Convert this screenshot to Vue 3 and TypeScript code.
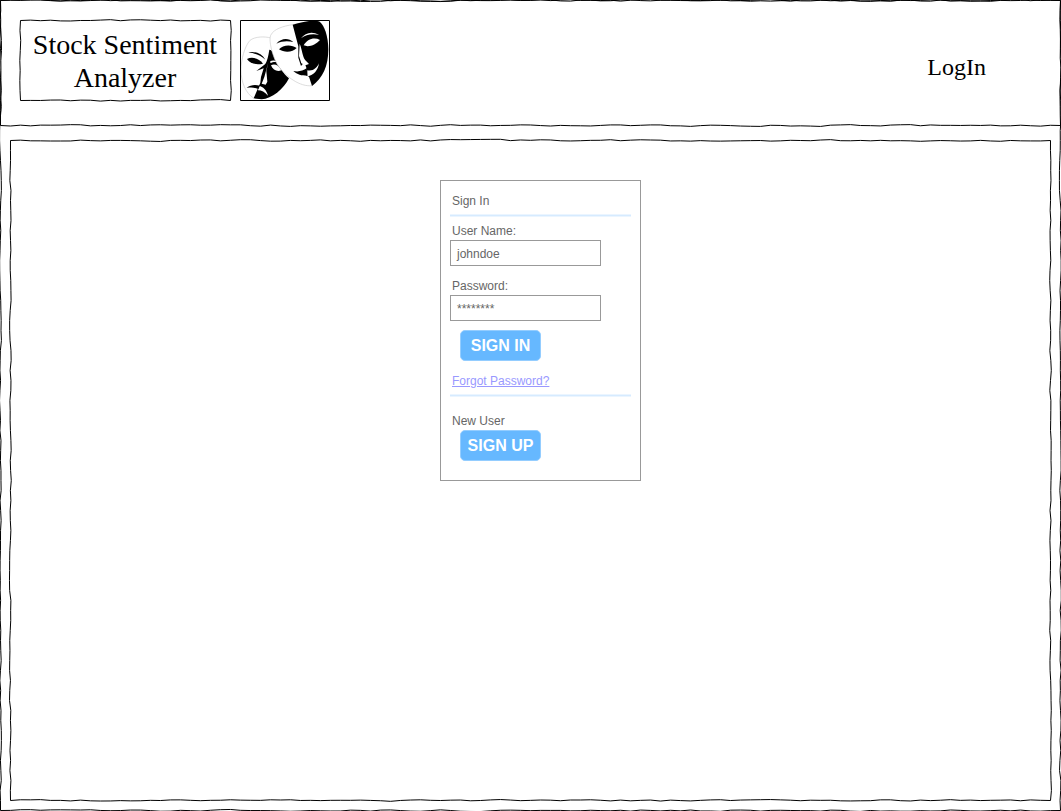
<script setup lang="ts">
import { computed, onBeforeUnmount, onMounted, reactive, ref } from 'vue'

type Point = [number, number]
interface Size { w: number; h: number }

const STEP = 10

function makeRandom(seed: number): () => number {
  let s = seed
  return () => {
    s = (s * 1664525 + 1013904223) % 4294967296
    return s / 4294967296
  }
}

// Walks from a to b in short strokes, drifting slightly off the straight line.
function wobble(a: Point, b: Point, rand: () => number): string {
  const length = Math.abs(b[0] - a[0]) + Math.abs(b[1] - a[1])
  const horizontal = a[1] === b[1]
  const count = Math.max(1, Math.round(length / STEP))
  let d = `M${a[0]} ${a[1]}`
  let drift = 0
  for (let i = 1; i <= count; i++) {
    const t = i / count
    drift = i === count ? 0 : drift * 0.4 + (rand() - 0.5) * 1.5
    const x = a[0] + (b[0] - a[0]) * t + (horizontal ? 0 : drift)
    const y = a[1] + (b[1] - a[1]) * t + (horizontal ? drift : 0)
    d += `L${x.toFixed(2)} ${y.toFixed(2)}`
  }
  return d
}

function frame(size: Size, seed: number): string {
  if (!size.w || !size.h) return ''
  const rand = makeRandom(seed)
  const r = size.w - 0.5
  const b = size.h - 0.5
  return (
    wobble([0.5, 0.5], [r, 0.5], rand) +
    wobble([r, 0.5], [r, b], rand) +
    wobble([0.5, b], [r, b], rand) +
    wobble([0.5, 0.5], [0.5, b], rand)
  )
}

const page = ref<HTMLElement | null>(null)
const header = ref<HTMLElement | null>(null)
const title = ref<HTMLElement | null>(null)
const content = ref<HTMLElement | null>(null)

const sizes = reactive({
  page: { w: 0, h: 0 },
  header: { w: 0, h: 0 },
  title: { w: 0, h: 0 },
  content: { w: 0, h: 0 },
})

function read(el: HTMLElement | null, size: Size): void {
  if (!el) return
  size.w = el.offsetWidth
  size.h = el.offsetHeight
}

function measure(): void {
  read(page.value, sizes.page)
  read(header.value, sizes.header)
  read(title.value, sizes.title)
  read(content.value, sizes.content)
}

let observer: ResizeObserver | null = null
onMounted(() => {
  measure()
  observer = new ResizeObserver(measure)
  if (page.value) observer.observe(page.value)
})
onBeforeUnmount(() => observer?.disconnect())

const pagePath = computed(() => frame(sizes.page, 11))
const headerPath = computed(() => frame(sizes.header, 47))
const titlePath = computed(() => frame(sizes.title, 5))
const contentPath = computed(() => frame(sizes.content, 83))

const userName = ref('johndoe')
const password = ref('********')
</script>

<template>
  <div ref="page" class="page">
    <svg class="sketch" aria-hidden="true"><path :d="pagePath" /></svg>

    <header ref="header" class="header">
      <svg class="sketch" aria-hidden="true"><path :d="headerPath" /></svg>
      <h1 ref="title" class="title">
        <svg class="sketch" aria-hidden="true"><path :d="titlePath" /></svg>
        Stock Sentiment Analyzer
      </h1>
      <svg class="logo" viewBox="15 15 270 243" role="img" aria-label="Comedy and tragedy masks">
        <rect x="15" y="15" width="270" height="243" fill="#fff" />
        <path class="edge" d="M108 69C90 64 60 64 45 76C29 94 18 134 18 166C18 200 32 236 57 250" />
        <path d="M103 104C112 105 118 114 122 126C132 153 145 177 162 190C146 222 110 252 80 253L56 250L69 220L76 203L78 186L86 160L64 168L90 148C97 139 100 122 103 104Z" />
        <path fill="#fff" d="M100 142L94 168L97 200L92 209L80 206L88 186Z" />
        <path fill="#fff" d="M108 151C118 146 130 149 139 166C126 171 114 165 108 151Z" />
        <path fill="#fff" d="M106 138C113 135 122 136 127 141C118 140 112 141 106 144Z" />
        <path fill="#fff" d="M72 213C84 214 95 226 99 242C89 231 80 226 69 226Z" />
        <path d="M40 112C60 108 80 115 91 134C76 121 62 116 40 112Z" />
        <path d="M36 132C51 124 73 130 84 146C65 150 45 147 36 132Z" />
        <path d="M35 219C47 209 60 209 75 212L70 222C57 217 47 217 35 219Z" />
        <path class="edge front" d="M173 29C145 33 116 42 107 61C100 77 113 125 128 150C153 186 195 216 231 212C263 190 278 150 278 103C278 65 268 30 254 21C237 13 200 25 173 29Z" />
        <path d="M173 29C200 22 237 13 254 20C268 30 280 65 280 103C280 153 263 190 231 213L222 185L213 181L214 158L208 142L198 153L190 128L190 94Z" />
        <path fill="#fff" d="M194 86C202 105 202 124 211 136L222 147L211 151L199 145L192 123Z" />
        <path fill="#fff" d="M198 70C211 53 231 47 252 60C230 55 213 60 198 70Z" />
        <path fill="#fff" d="M206 91C216 73 237 65 255 75C242 89 222 98 206 91Z" />
        <path fill="#fff" d="M217 166C234 170 246 158 252 145C249 165 237 181 217 184Z" />
        <path d="M124 86C139 69 160 68 175 81C159 77 142 77 124 86Z" />
        <path d="M132 103C143 89 170 88 185 99C174 112 148 114 132 103Z" />
        <path d="M175 168C190 171 204 168 215 160L217 182C199 182 187 179 175 168Z" />
        <path class="border" d="M16.5 16.5H283.5V256.5H16.5Z" />
      </svg>
      <a class="login" href="#login">LogIn</a>
    </header>

    <main ref="content" class="content">
      <svg class="sketch" aria-hidden="true"><path :d="contentPath" /></svg>
      <form class="panel" @submit.prevent>
        <h2 class="heading">Sign In</h2>
        <hr class="rule" />
        <label class="label" for="user-name">User Name:</label>
        <input id="user-name" v-model="userName" class="field" type="text" />
        <label class="label spaced" for="password">Password:</label>
        <input id="password" v-model="password" class="field" type="text" autocomplete="off" />
        <button class="action signin" type="submit">SIGN IN</button>
        <a class="forgot" href="#forgot">Forgot Password?</a>
        <hr class="rule" />
        <p class="new-user">New User</p>
        <button class="action" type="button">SIGN UP</button>
      </form>
    </main>
  </div>
</template>

<style>
body {
  background: #fff;
}
</style>

<style scoped>
.page {
  position: relative;
  box-sizing: border-box;
  display: flex;
  flex-direction: column;
  min-height: 100vh;
  overflow: hidden;
  font-family: "Liberation Sans", Arial, sans-serif;
}

.sketch {
  position: absolute;
  inset: 0;
  width: 100%;
  height: 100%;
  overflow: visible;
  pointer-events: none;
}

.sketch path {
  fill: none;
  stroke: #000;
  stroke-width: 1;
}

.header {
  position: relative;
  display: flex;
  align-items: flex-start;
  gap: 9px;
  padding: 20px 75px 25px 20px;
}

.title {
  position: relative;
  box-sizing: border-box;
  width: 211px;
  margin: 0;
  padding: 8px 11px 7px 10px;
  font: 400 28px/33px "Liberation Serif", "Times New Roman", serif;
  text-align: center;
}

.logo {
  flex: none;
  width: 90px;
  height: 81px;
}

.edge {
  fill: none;
  stroke: #ccc;
  stroke-width: 2;
}

.front {
  fill: #fff;
}

.border {
  fill: none;
  stroke: #000;
  stroke-width: 3;
}

.login {
  margin: 33px 0 0 auto;
  color: #000;
  font: 24px/28px "Liberation Serif", "Times New Roman", serif;
  text-decoration: none;
}

.content {
  position: relative;
  flex: 1;
  margin: 14px 10px 10px;
  padding: 40px 0 40px 20px;
}

.panel {
  box-sizing: border-box;
  display: flex;
  flex-direction: column;
  align-items: flex-start;
  width: 201px;
  margin: 0 auto;
  padding: 11px 9px 19px;
  border: 1px solid #999;
  color: #666;
  font-size: 12px;
  line-height: 18px;
}

.heading,
.new-user {
  margin: 0 2px;
  font-size: 12px;
  font-weight: 400;
}

.rule {
  align-self: stretch;
  box-sizing: border-box;
  height: 3px;
  margin: 4px 0 5px;
  border: 1px solid #ebf5ff;
  border-width: 1px 0;
  background: #d6ebff;
}

.label {
  margin: 0 2px;
}

.spaced {
  margin-top: 11px;
}

.field {
  box-sizing: border-box;
  width: 151px;
  height: 26px;
  margin: 0;
  padding: 2px 2px 0;
  border: 1px solid #999;
  border-radius: 0;
  background: #fff;
  color: #666;
  font: inherit;
  text-indent: 4px;
}

.action {
  box-sizing: border-box;
  width: 81px;
  height: 31px;
  margin: 0 10px;
  padding: 0;
  border: 1px solid #94cdff;
  border-radius: 5px;
  background: #66b8ff;
  color: #fff;
  font: bold 16px/18px "Liberation Sans", Arial, sans-serif;
}

.signin {
  margin-top: 9px;
}

.forgot {
  margin: 11px 2px 0;
  color: #9999ff;
}

.new-user {
  margin-top: 10px;
}
</style>
